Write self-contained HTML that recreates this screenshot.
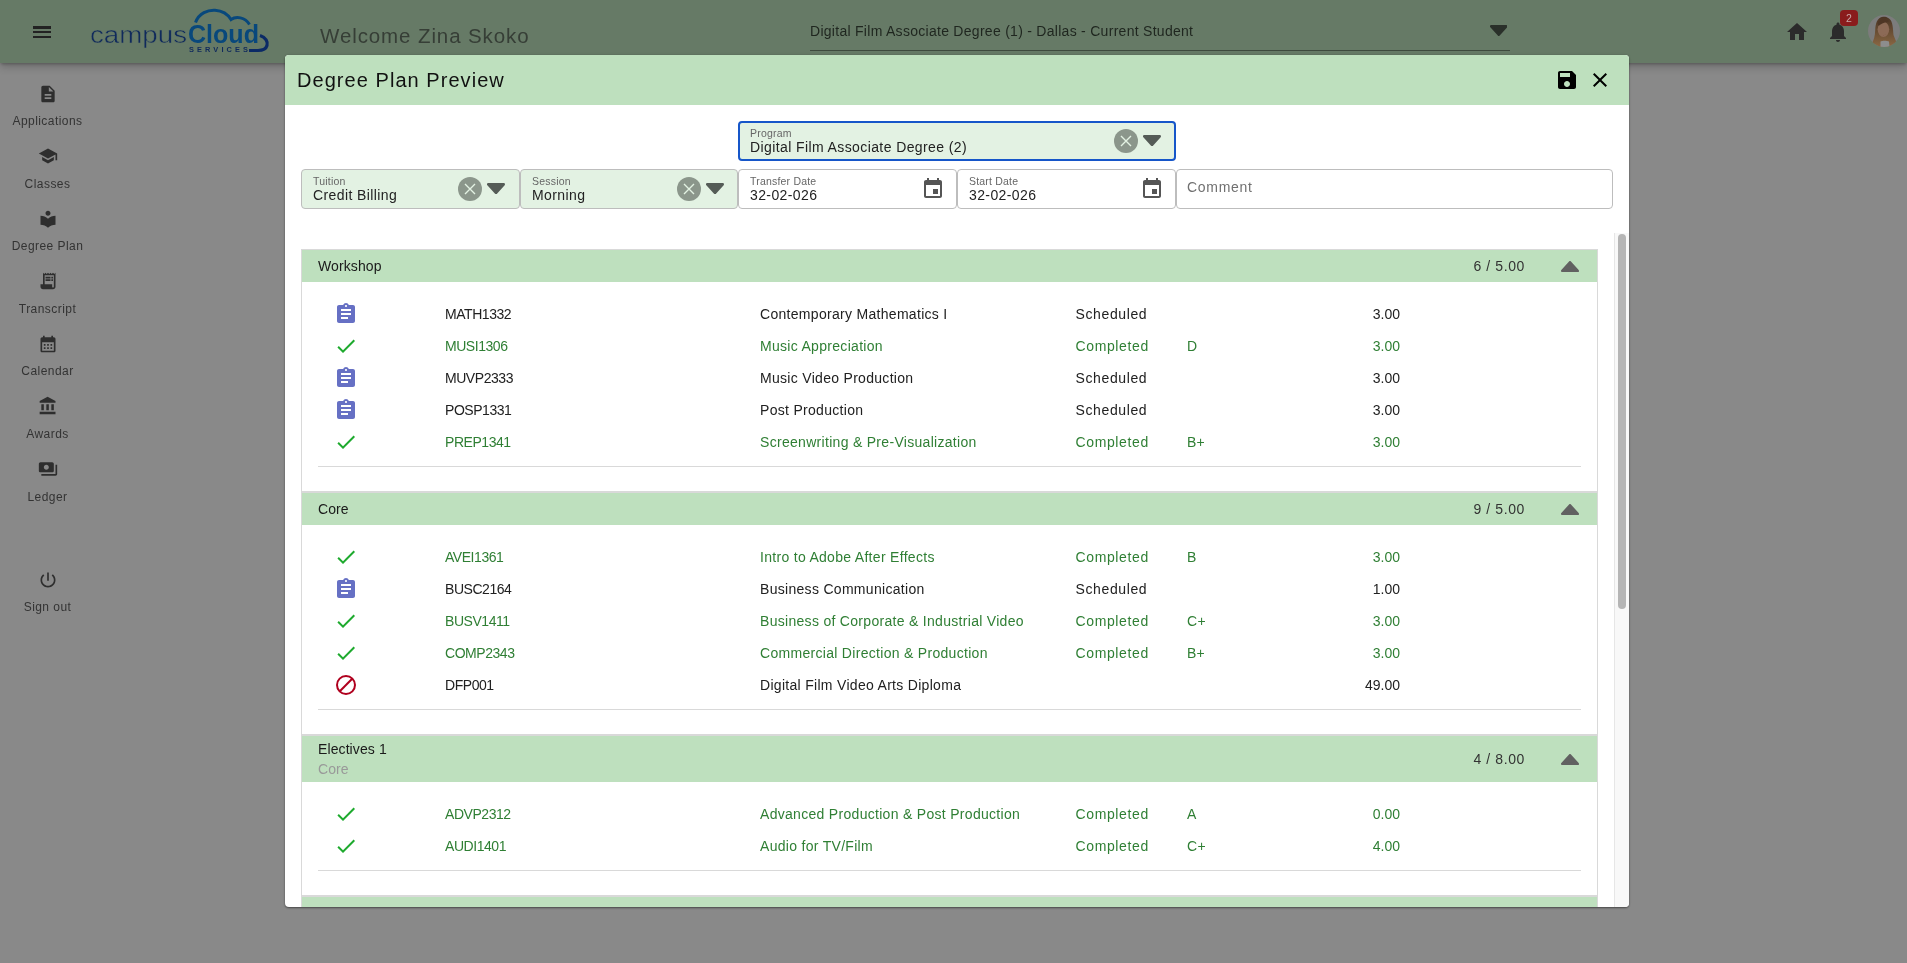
<!DOCTYPE html>
<html>
<head>
<meta charset="utf-8">
<style>
*{box-sizing:border-box;margin:0;padding:0}
html,body{width:1907px;height:963px;overflow:hidden;background:#898989;font-family:"Liberation Sans",sans-serif;color:#222}
.abs{position:absolute}
#hdr{will-change:transform;position:absolute;left:0;top:0;width:1907px;height:63px;background:#667a66;box-shadow:0 2px 3px -1px rgba(0,0,0,.25),0 4px 8px 0 rgba(0,0,0,.2)}
.side{will-change:transform;position:absolute;left:0;width:95px;text-align:center;font-size:12px;letter-spacing:.45px;color:#333}
.side svg{position:absolute;left:38px;width:20px;height:20px;fill:#2e2e2e}
.side span{position:absolute;left:0;width:95px;text-align:center;white-space:nowrap}
#modal{will-change:transform;position:absolute;left:285px;top:55px;width:1344px;height:852px;background:#fff;border-radius:4px;overflow:hidden;box-shadow:0 1px 2px rgba(0,0,0,.45),0 0 3px rgba(0,0,0,.12)}
#mh{position:absolute;left:0;top:0;width:1344px;height:50px;background:#bee0be}
#mh .t{position:absolute;left:12px;top:0;line-height:50px;font-size:20px;letter-spacing:1.05px;color:#111}
.fld{position:absolute;height:40px;border:1px solid #bdbdbd;border-radius:4px;background:#e3f2e3}
.fld.w{background:#fff}
.fld .lb{position:absolute;left:11px;top:5px;font-size:10.5px;letter-spacing:.2px;color:#666;line-height:12px;white-space:nowrap}
.fld .v{position:absolute;left:11px;top:18px;font-size:14px;letter-spacing:.4px;color:#222;line-height:17px;white-space:nowrap}
.clr{position:absolute;width:24px;height:24px;border-radius:50%;background:#8b968b}
.clr svg{position:absolute;left:0;top:0;width:24px;height:24px}
.caret{position:absolute;width:18px;height:11.2px;fill:#555c57;stroke:#555c57}
.cal{position:absolute;width:24px;height:24px;fill:#555}
#scroll{position:absolute;left:16px;top:178px;width:1328px;height:674px;overflow:hidden}
#track{position:absolute;left:1329px;top:178px;width:15px;height:674px;background:#f8f8f8;border-left:1px solid #e6e6e6}
#thumb{position:absolute;left:3px;top:1px;width:8px;height:375px;border-radius:4px;background:#b5b5b5}
.sec{position:relative;width:1297px;border:1px solid #d9d9d9;background:#fff}
.sh{position:relative;height:32px;background:#bee0be}
.sh .n{position:absolute;left:16px;top:0;line-height:32px;font-size:14px;letter-spacing:.1px;color:#1a1a1a}
.sh .c{position:absolute;right:72px;top:0;line-height:32px;font-size:14px;letter-spacing:.6px;color:#333}
.sh svg{position:absolute;left:1259px;top:10.8px;width:18px;height:11.2px;fill:#616161;stroke:#616161}
.row{position:relative;height:32px;line-height:32px;font-size:14px;letter-spacing:.28px;color:#212121;white-space:nowrap}
.row.g{color:#2f7f34}
.row>*{position:absolute;top:0}
.row svg{left:32px;top:4px;width:24px;height:24px}
.row .cd{left:143px;letter-spacing:-.45px}
.row .nm{left:458px;letter-spacing:.3px}
.row .st{left:773.5px;letter-spacing:.62px}
.row .gr{left:885px}
.row .cr{left:900px;width:198px;text-align:right;letter-spacing:0}
.div{position:relative;margin:8px 16px 0 16px;height:1px;background:#d9d9d9}
</style>
</head>
<body>
<!-- HEADER -->
<div id="hdr">
  <svg class="abs" style="left:30px;top:20px;width:24px;height:24px" viewBox="0 0 24 24"><path fill="#222" d="M3 18h18v-2H3v2zm0-5h18v-2H3v2zm0-6v2h18V6H3z"/></svg>
  <svg class="abs" style="left:0;top:0;width:300px;height:63px" viewBox="0 0 300 63">
    <text x="90" y="42.5" font-family="Liberation Sans" font-size="24.5" textLength="97" lengthAdjust="spacingAndGlyphs" fill="#102a5c" stroke="#667a66" stroke-width="0.5">campus</text>
    <text x="188" y="42.5" font-family="Liberation Sans" font-weight="bold" font-size="25" textLength="71" lengthAdjust="spacingAndGlyphs" fill="#08487c">Cloud</text>
    <path d="M195.5 22.5 C199 13 208 9.8 215 10.2 C222 10.6 228 14.5 231 19.5 C236 16 245 17 249.5 24.5" fill="none" stroke="#08487c" stroke-width="3"/>
    <path d="M260 35.5 C266 37.5 268 42 267 45.5 C266 49 262 50.5 258 50.5 L249 50.5" fill="none" stroke="#0b2a66" stroke-width="3.2"/>
    <text x="189" y="51.6" font-family="Liberation Sans" font-weight="bold" font-size="7.4" letter-spacing="3.1" fill="#102a5c">SERVICES</text>
  </svg>
  <div class="abs" style="left:320px;top:22.5px;font-size:20.5px;letter-spacing:.9px;color:#363e36;line-height:26px;white-space:nowrap">Welcome Zina Skoko</div>
  <div class="abs" style="left:810px;top:23px;font-size:14px;letter-spacing:.28px;color:#1f261f;line-height:17px;white-space:nowrap">Digital Film Associate Degree (1) - Dallas - Current Student</div>
  <div class="abs" style="left:810px;top:50px;width:700px;height:1px;background:#3e4a3e"></div>
  <svg class="abs" style="left:1489.5px;top:25px;width:17.6px;height:11px" viewBox="0 0 18 11.2" preserveAspectRatio="none"><polygon fill="#2a302a" stroke="#2a302a" points="1.3,1.3 16.7,1.3 9,9.9" stroke-width="2.6" stroke-linejoin="round"/></svg>
  <svg class="abs" style="left:1784.5px;top:20px;width:24px;height:24px" viewBox="0 0 24 24"><path fill="#2b2b2b" d="M10 20v-6h4v6h5v-8h3L12 3 2 12h3v8z"/></svg>
  <svg class="abs" style="left:1826px;top:20px;width:24px;height:24px" viewBox="0 0 24 24"><path fill="#2b2b2b" d="M12 22c1.1 0 2-.9 2-2h-4c0 1.1.89 2 2 2zm6-6v-5c0-3.07-1.64-5.64-4.5-6.32V4c0-.83-.67-1.5-1.5-1.5s-1.5.67-1.5 1.5v.68C7.63 5.36 6 7.92 6 11v5l-2 2v1h16v-1l-2-2z"/></svg>
  <div class="abs" style="left:1840px;top:10px;width:18px;height:16px;border-radius:4px;background:#8a1c1c;color:#c9a9a9;font-size:10.5px;line-height:17px;text-align:center">2</div>
  <svg class="abs" style="left:1868px;top:15px;width:32px;height:32px" viewBox="0 0 32 32">
    <defs><clipPath id="av"><circle cx="16" cy="16" r="16"/></clipPath>
    <linearGradient id="hg" x1="0" y1="0" x2="0" y2="1"><stop offset="0" stop-color="#4a3424"/><stop offset="1" stop-color="#8a6844"/></linearGradient></defs>
    <g clip-path="url(#av)">
      <rect width="32" height="32" fill="#7c7c7c"/>
      <path d="M15 1.8 C9 2.5 7.5 9 7.2 15 C7 21 6 25 3 30 L4 32 L30 32 C29 28 27 24 25.5 20 C25 14 25 6 21 3.5 C19 2 17 1.7 15 1.8 Z" fill="url(#hg)"/>
      <ellipse cx="15.4" cy="14.3" rx="5.8" ry="7.6" fill="#8c6a56"/>
      <path d="M9.5 8 C11 4 17 3 21 6 C20 7.5 15 7 10.5 11 Z" fill="#4e3625"/>
      <path d="M12.5 18.5 C14 20.5 17 20.5 18.5 18.5 C17.5 20.8 13.8 20.8 12.5 18.5Z" fill="#7a3b38"/>
      <path d="M12.5 26.5 C14 25.5 19 25.5 21 26.5 L21.5 32 L12.5 32 Z" fill="#8d8d8d"/>
    </g>
  </svg>
</div>
<!-- SIDEBAR -->
<div class="side" style="top:0">
  <svg style="top:83.5px" viewBox="0 0 24 24"><path d="M14 2H6c-1.1 0-1.99.9-1.99 2L4 20c0 1.1.89 2 1.99 2H18c1.1 0 2-.9 2-2V8l-6-6zm2 16H8v-2h8v2zm0-4H8v-2h8v2zm-3-5V3.5L18.5 9H13z"/></svg>
  <span style="top:114.0px">Applications</span>
  <svg style="top:145.5px" viewBox="0 0 24 24"><path d="M5 13.18v4L12 21l7-3.82v-4L12 17l-7-3.82zM12 3L1 9l11 6 9-4.91V17h2V9L12 3z"/></svg>
  <span style="top:176.5px">Classes</span>
  <svg style="top:208.5px" viewBox="0 0 24 24"><path d="M12 11.55C9.64 9.35 6.48 8 3 8v11c3.48 0 6.64 1.35 9 3.55 2.36-2.19 5.52-3.55 9-3.55V8c-3.48 0-6.64 1.35-9 3.55zM12 8c1.66 0 3-1.34 3-3s-1.34-3-3-3-3 1.34-3 3 1.34 3 3 3z"/></svg>
  <span style="top:239.0px">Degree Plan</span>
  <svg style="top:271px" viewBox="0 0 24 24"><path d="M19.5 3.5L18 2l-1.5 1.5L15 2l-1.5 1.5L12 2l-1.5 1.5L9 2 7.5 3.5 6 2v14H3v3c0 1.66 1.34 3 3 3h12c1.66 0 3-1.34 3-3V2l-1.5 1.5zM19 19c0 .55-.45 1-1 1s-1-.45-1-1v-3H8V5h11v14z"/><path d="M9 7h6v2H9zM16 7h2v2h-2zM9 10h6v2H9zM16 10h2v2h-2z"/></svg>
  <span style="top:302.0px">Transcript</span>
  <svg style="top:333.5px" viewBox="0 0 24 24"><path d="M19 4h-1V2h-2v2H8V2H6v2H5c-1.11 0-1.99.9-1.99 2L3 20c0 1.1.89 2 2 2h14c1.1 0 2-.9 2-2V6c0-1.1-.9-2-2-2zm0 16H5V10h14v10zM9 14H7v-2h2v2zm4 0h-2v-2h2v2zm4 0h-2v-2h2v2zm-8 4H7v-2h2v2zm4 0h-2v-2h2v2zm4 0h-2v-2h2v2z"/></svg>
  <span style="top:364.0px">Calendar</span>
  <svg style="top:396px" viewBox="0 0 24 24"><path d="M4 10v7h3v-7H4zm6 0v7h3v-7h-3zM2 22h19v-3H2v3zm14-12v7h3v-7h-3zm-4.5-9L2 6v2h19V6l-9.5-5z"/></svg>
  <span style="top:427.0px">Awards</span>
  <svg style="top:458.5px" viewBox="0 0 24 24"><path d="M19 14V6c0-1.1-.9-2-2-2H3c-1.1 0-2 .9-2 2v8c0 1.1.9 2 2 2h14c1.1 0 2-.9 2-2zm-9-1c-1.66 0-3-1.34-3-3s1.34-3 3-3 3 1.34 3 3-1.34 3-3 3zm13-6v11c0 1.1-.9 2-2 2H4v-2h17V7h2z"/></svg>
  <span style="top:490.0px">Ledger</span>
  <svg style="top:569.5px" viewBox="0 0 24 24"><path d="M13 3h-2v10h2V3zm4.83 2.17l-1.42 1.42C17.99 7.86 19 9.81 19 12c0 3.870-3.13 7-7 7s-7-3.13-7-7c0-2.19 1.01-4.14 2.58-5.420L6.17 5.17C4.23 6.82 3 9.26 3 12c0 4.97 4.03 9 9 9s9-4.03 9-9c0-2.740-1.23-5.18-3.17-6.83z"/></svg>
  <span style="top:600.0px">Sign out</span>
</div>
<!-- SIDEBAR -->
<div id="modal">
  <div id="mh"><div class="t">Degree Plan Preview</div></div>
  <svg class="abs" style="left:1270px;top:13px;width:24px;height:24px" viewBox="0 0 24 24"><path fill="#000" d="M17 3H5c-1.11 0-2 .9-2 2v14c0 1.1.89 2 2 2h14c1.1 0 2-.9 2-2V7l-4-4zm-5 16c-1.66 0-3-1.34-3-3s1.34-3 3-3 3 1.34 3 3-1.34 3-3 3zm3-10H5V5h10v4z"/></svg>
  <svg class="abs" style="left:1303px;top:13px;width:24px;height:24px" viewBox="0 0 24 24"><path fill="#000" d="M19 6.41L17.59 5 12 10.59 6.41 5 5 6.41 10.59 12 5 17.59 6.41 19 12 13.41 17.59 19 19 17.59 13.41 12z"/></svg>
<div class="fld" style="left:453px;top:66px;width:438px;border:2px solid #1656c9"><div class="lb" style="left:10px;top:3.7px">Program</div><div class="v" style="left:10px;top:16.3px">Digital Film Associate Degree (2)</div><div class="clr" style="left:373.6px;top:5.8px"><svg viewBox="0 0 24 24"><path d="M7 7L17 17M17 7L7 17" stroke="#e3f2e3" stroke-width="1.4" fill="none"/></svg></div><svg class="caret" style="left:403.4px;top:11.6px" viewBox="0 0 18 11.2" preserveAspectRatio="none"><polygon points="1.3,1.3 16.7,1.3 9,9.9" stroke-width="2.6" stroke-linejoin="round"/></svg></div>
<div class="fld" style="left:16px;top:114px;width:219px"><div class="lb" style="top:4.7px">Tuition</div><div class="v" style="top:17.3px">Credit Billing</div><div class="clr" style="left:155.75px;top:6.9px"><svg viewBox="0 0 24 24"><path d="M7 7L17 17M17 7L7 17" stroke="#e3f2e3" stroke-width="1.4" fill="none"/></svg></div><svg class="caret" style="left:184.8px;top:12.9px" viewBox="0 0 18 11.2" preserveAspectRatio="none"><polygon points="1.3,1.3 16.7,1.3 9,9.9" stroke-width="2.6" stroke-linejoin="round"/></svg></div>
<div class="fld" style="left:235px;top:114px;width:218px"><div class="lb" style="top:4.7px">Session</div><div class="v" style="top:17.3px">Morning</div><div class="clr" style="left:155.75px;top:6.9px"><svg viewBox="0 0 24 24"><path d="M7 7L17 17M17 7L7 17" stroke="#e3f2e3" stroke-width="1.4" fill="none"/></svg></div><svg class="caret" style="left:184.8px;top:12.9px" viewBox="0 0 18 11.2" preserveAspectRatio="none"><polygon points="1.3,1.3 16.7,1.3 9,9.9" stroke-width="2.6" stroke-linejoin="round"/></svg></div>
<div class="fld w" style="left:453px;top:114px;width:219px"><div class="lb" style="top:4.7px">Transfer Date</div><div class="v" style="top:17.3px">32-02-026</div><svg class="cal" style="left:182px;top:7px" viewBox="0 0 24 24"><path d="M17 12h-5v5h5v-5zM16 1v2H8V1H6v2H5c-1.11 0-1.99.9-1.99 2L3 19c0 1.1.89 2 2 2h14c1.1 0 2-.9 2-2V5c0-1.1-.9-2-2-2h-1V1h-2zm3 18H5V8h14v11z"/></svg></div>
<div class="fld w" style="left:672px;top:114px;width:219px"><div class="lb" style="top:4.7px">Start Date</div><div class="v" style="top:17.3px">32-02-026</div><svg class="cal" style="left:182px;top:7px" viewBox="0 0 24 24"><path d="M17 12h-5v5h5v-5zM16 1v2H8V1H6v2H5c-1.11 0-1.99.9-1.99 2L3 19c0 1.1.89 2 2 2h14c1.1 0 2-.9 2-2V5c0-1.1-.9-2-2-2h-1V1h-2zm3 18H5V8h14v11z"/></svg></div>
<div class="fld w" style="left:891px;top:114px;width:437px"><div class="v" style="left:10px;top:8.6px;color:#707070;letter-spacing:.7px">Comment</div></div>
  <div id="scroll"><div style="height:16px"></div>
<div class="sec">
<div class="sh"><div class="n">Workshop</div><div class="c">6 / 5.00</div><svg viewBox="0 0 18 11.2" preserveAspectRatio="none"><polygon points="1.3,9.9 16.7,9.9 9,1.3" stroke-width="2.6" stroke-linejoin="round"/></svg></div>
<div style="height:16px"></div>
<div class="row"><svg viewBox="0 0 24 24"><path fill="#6670c4" d="M19 3h-4.18C14.4 1.84 13.3 1 12 1c-1.3 0-2.4.84-2.82 2H5c-1.1 0-2 .9-2 2v14c0 1.1.9 2 2 2h14c1.1 0 2-.9 2-2V5c0-1.1-.9-2-2-2zm-7 0c.55 0 1 .45 1 1s-.45 1-1 1-1-.45-1-1 .45-1 1-1zm2 14H7v-2h7v2zm3-4H7v-2h10v2zm0-4H7V7h10v2z"/></svg><span class="cd">MATH1332</span><span class="nm">Contemporary Mathematics I</span><span class="st">Scheduled</span><span class="gr"></span><span class="cr">3.00</span></div>
<div class="row g"><svg viewBox="0 0 24 24"><path fill="#1eaa2e" d="M9 16.17L4.83 12l-1.42 1.41L9 19 21 7l-1.41-1.41z"/></svg><span class="cd">MUSI1306</span><span class="nm">Music Appreciation</span><span class="st">Completed</span><span class="gr">D</span><span class="cr">3.00</span></div>
<div class="row"><svg viewBox="0 0 24 24"><path fill="#6670c4" d="M19 3h-4.18C14.4 1.84 13.3 1 12 1c-1.3 0-2.4.84-2.82 2H5c-1.1 0-2 .9-2 2v14c0 1.1.9 2 2 2h14c1.1 0 2-.9 2-2V5c0-1.1-.9-2-2-2zm-7 0c.55 0 1 .45 1 1s-.45 1-1 1-1-.45-1-1 .45-1 1-1zm2 14H7v-2h7v2zm3-4H7v-2h10v2zm0-4H7V7h10v2z"/></svg><span class="cd">MUVP2333</span><span class="nm">Music Video Production</span><span class="st">Scheduled</span><span class="gr"></span><span class="cr">3.00</span></div>
<div class="row"><svg viewBox="0 0 24 24"><path fill="#6670c4" d="M19 3h-4.18C14.4 1.84 13.3 1 12 1c-1.3 0-2.4.84-2.82 2H5c-1.1 0-2 .9-2 2v14c0 1.1.9 2 2 2h14c1.1 0 2-.9 2-2V5c0-1.1-.9-2-2-2zm-7 0c.55 0 1 .45 1 1s-.45 1-1 1-1-.45-1-1 .45-1 1-1zm2 14H7v-2h7v2zm3-4H7v-2h10v2zm0-4H7V7h10v2z"/></svg><span class="cd">POSP1331</span><span class="nm">Post Production</span><span class="st">Scheduled</span><span class="gr"></span><span class="cr">3.00</span></div>
<div class="row g"><svg viewBox="0 0 24 24"><path fill="#1eaa2e" d="M9 16.17L4.83 12l-1.42 1.41L9 19 21 7l-1.41-1.41z"/></svg><span class="cd">PREP1341</span><span class="nm">Screenwriting &amp; Pre-Visualization</span><span class="st">Completed</span><span class="gr">B+</span><span class="cr">3.00</span></div>
<div class="div"></div><div style="height:24px"></div>
</div>
<div class="sec">
<div class="sh"><div class="n">Core</div><div class="c">9 / 5.00</div><svg viewBox="0 0 18 11.2" preserveAspectRatio="none"><polygon points="1.3,9.9 16.7,9.9 9,1.3" stroke-width="2.6" stroke-linejoin="round"/></svg></div>
<div style="height:16px"></div>
<div class="row g"><svg viewBox="0 0 24 24"><path fill="#1eaa2e" d="M9 16.17L4.83 12l-1.42 1.41L9 19 21 7l-1.41-1.41z"/></svg><span class="cd">AVEI1361</span><span class="nm">Intro to Adobe After Effects</span><span class="st">Completed</span><span class="gr">B</span><span class="cr">3.00</span></div>
<div class="row"><svg viewBox="0 0 24 24"><path fill="#6670c4" d="M19 3h-4.18C14.4 1.84 13.3 1 12 1c-1.3 0-2.4.84-2.82 2H5c-1.1 0-2 .9-2 2v14c0 1.1.9 2 2 2h14c1.1 0 2-.9 2-2V5c0-1.1-.9-2-2-2zm-7 0c.55 0 1 .45 1 1s-.45 1-1 1-1-.45-1-1 .45-1 1-1zm2 14H7v-2h7v2zm3-4H7v-2h10v2zm0-4H7V7h10v2z"/></svg><span class="cd">BUSC2164</span><span class="nm">Business Communication</span><span class="st">Scheduled</span><span class="gr"></span><span class="cr">1.00</span></div>
<div class="row g"><svg viewBox="0 0 24 24"><path fill="#1eaa2e" d="M9 16.17L4.83 12l-1.42 1.41L9 19 21 7l-1.41-1.41z"/></svg><span class="cd">BUSV1411</span><span class="nm">Business of Corporate &amp; Industrial Video</span><span class="st">Completed</span><span class="gr">C+</span><span class="cr">3.00</span></div>
<div class="row g"><svg viewBox="0 0 24 24"><path fill="#1eaa2e" d="M9 16.17L4.83 12l-1.42 1.41L9 19 21 7l-1.41-1.41z"/></svg><span class="cd">COMP2343</span><span class="nm">Commercial Direction &amp; Production</span><span class="st">Completed</span><span class="gr">B+</span><span class="cr">3.00</span></div>
<div class="row"><svg viewBox="0 0 24 24"><circle cx="12" cy="12" r="9" fill="none" stroke="#b0001e" stroke-width="2"/><path d="M5.8 18.2L18.2 5.8" stroke="#b0001e" stroke-width="2"/></svg><span class="cd">DFP001</span><span class="nm">Digital Film Video Arts Diploma</span><span class="st"></span><span class="gr"></span><span class="cr">49.00</span></div>
<div class="div"></div><div style="height:24px"></div>
</div>
<div class="sec">
<div class="sh" style="height:46px"><div class="n" style="top:5px;line-height:17px">Electives 1</div><div class="n" style="top:25px;line-height:17px;color:#999">Core</div><div class="c" style="line-height:46px">4 / 8.00</div><svg style="top:17.5px" viewBox="0 0 18 11.2" preserveAspectRatio="none"><polygon points="1.3,9.9 16.7,9.9 9,1.3" stroke-width="2.6" stroke-linejoin="round"/></svg></div>
<div style="height:16px"></div>
<div class="row g"><svg viewBox="0 0 24 24"><path fill="#1eaa2e" d="M9 16.17L4.83 12l-1.42 1.41L9 19 21 7l-1.41-1.41z"/></svg><span class="cd">ADVP2312</span><span class="nm">Advanced Production &amp; Post Production</span><span class="st">Completed</span><span class="gr">A</span><span class="cr">0.00</span></div>
<div class="row g"><svg viewBox="0 0 24 24"><path fill="#1eaa2e" d="M9 16.17L4.83 12l-1.42 1.41L9 19 21 7l-1.41-1.41z"/></svg><span class="cd">AUDI1401</span><span class="nm">Audio for TV/Film</span><span class="st">Completed</span><span class="gr">C+</span><span class="cr">4.00</span></div>
<div class="div"></div><div style="height:24px"></div>
</div>
<div class="sec">
<div class="sh"></div>
</div>
  </div>
  <div id="track"><div id="thumb"></div></div>
</div>
</body>
</html>
